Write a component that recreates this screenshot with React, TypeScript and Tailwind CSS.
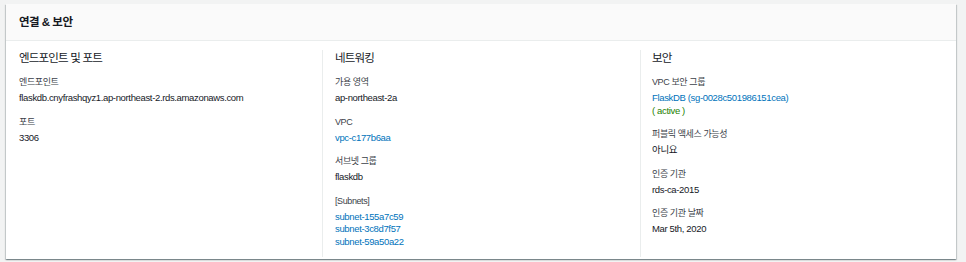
const FONT = "font-['Liberation_Sans','Noto_Sans_CJK_KR',sans-serif]";

type Field = {
  label: string;
  lines: { text: string; tone?: "link" | "ok" }[];
};

const COLUMNS: { title: string; fields: Field[] }[] = [
  {
    title: "엔드포인트 및 포트",
    fields: [
      { label: "엔드포인트", lines: [{ text: "flaskdb.cnyfrashqyz1.ap-northeast-2.rds.amazonaws.com" }] },
      { label: "포트", lines: [{ text: "3306" }] },
    ],
  },
  {
    title: "네트워킹",
    fields: [
      { label: "가용 영역", lines: [{ text: "ap-northeast-2a" }] },
      { label: "VPC", lines: [{ text: "vpc-c177b6aa", tone: "link" }] },
      { label: "서브넷 그룹", lines: [{ text: "flaskdb" }] },
      {
        label: "[Subnets]",
        lines: [
          { text: "subnet-155a7c59", tone: "link" },
          { text: "subnet-3c8d7f57", tone: "link" },
          { text: "subnet-59a50a22", tone: "link" },
        ],
      },
    ],
  },
  {
    title: "보안",
    fields: [
      {
        label: "VPC 보안 그룹",
        lines: [
          { text: "FlaskDB (sg-0028c501986151cea)", tone: "link" },
          { text: "( active )", tone: "ok" },
        ],
      },
      { label: "퍼블릭 액세스 가능성", lines: [{ text: "아니요" }] },
      { label: "인증 기관", lines: [{ text: "rds-ca-2015" }] },
      { label: "인증 기관 날짜", lines: [{ text: "Mar 5th, 2020" }] },
    ],
  },
];

function FieldBlock({ field }: { field: Field }) {
  return (
    <div className="mb-[9px]">
      <div className="mb-[2px] text-[9px] leading-[16px] tracking-[-0.4px] text-[#3b4149]">{field.label}</div>
      {field.lines.map((l) => (
        <div
          key={l.text}
          className={[
            "text-[9.5px] leading-[12.5px] tracking-[-0.35px]",
            l.tone === "link" ? "text-[#0073bb]" : l.tone === "ok" ? "text-[#1d8102]" : "text-[#16191f]",
          ].join(" ")}
        >
          {l.text}
        </div>
      ))}
    </div>
  );
}

export default function App() {
  return (
    <div className={`${FONT} h-[262px] w-[966px] overflow-hidden bg-[#f2f3f3] pl-[6px] pt-[4px]`}>
      <div className="h-[255px] w-[950px] bg-white shadow-[0_1px_1px_0_rgba(0,28,36,0.3),1px_1px_1px_0_rgba(0,28,36,0.15),-1px_1px_1px_0_rgba(0,28,36,0.15)]">
        {/* header */}
        <div className="flex h-[37px] items-center border-b border-[#eaeded] bg-[#fafafa] pl-[13px] pt-[2px]">
          <h2 className="text-[11.5px] font-bold tracking-[-0.5px] text-[#16191f]">연결 &amp; 보안</h2>
        </div>

        {/* columns */}
        <div className="mt-[9px] grid h-[197px] grid-cols-[303px_318px_1fr] pl-[13px]">
          {COLUMNS.map((c, i) => (
            <div
              key={c.title}
              className={i === 0 ? "" : i === 1 ? "border-l border-[#eaeded] pl-[12px]" : "border-l border-[#eaeded] pl-[11px]"}
            >
              <div className="mb-[8px] text-[11.5px] leading-[16px] tracking-[-0.8px] text-[#16191f]">{c.title}</div>
              {c.fields.map((f) => (
                <FieldBlock key={f.label} field={f} />
              ))}
            </div>
          ))}
        </div>
      </div>
    </div>
  );
}
